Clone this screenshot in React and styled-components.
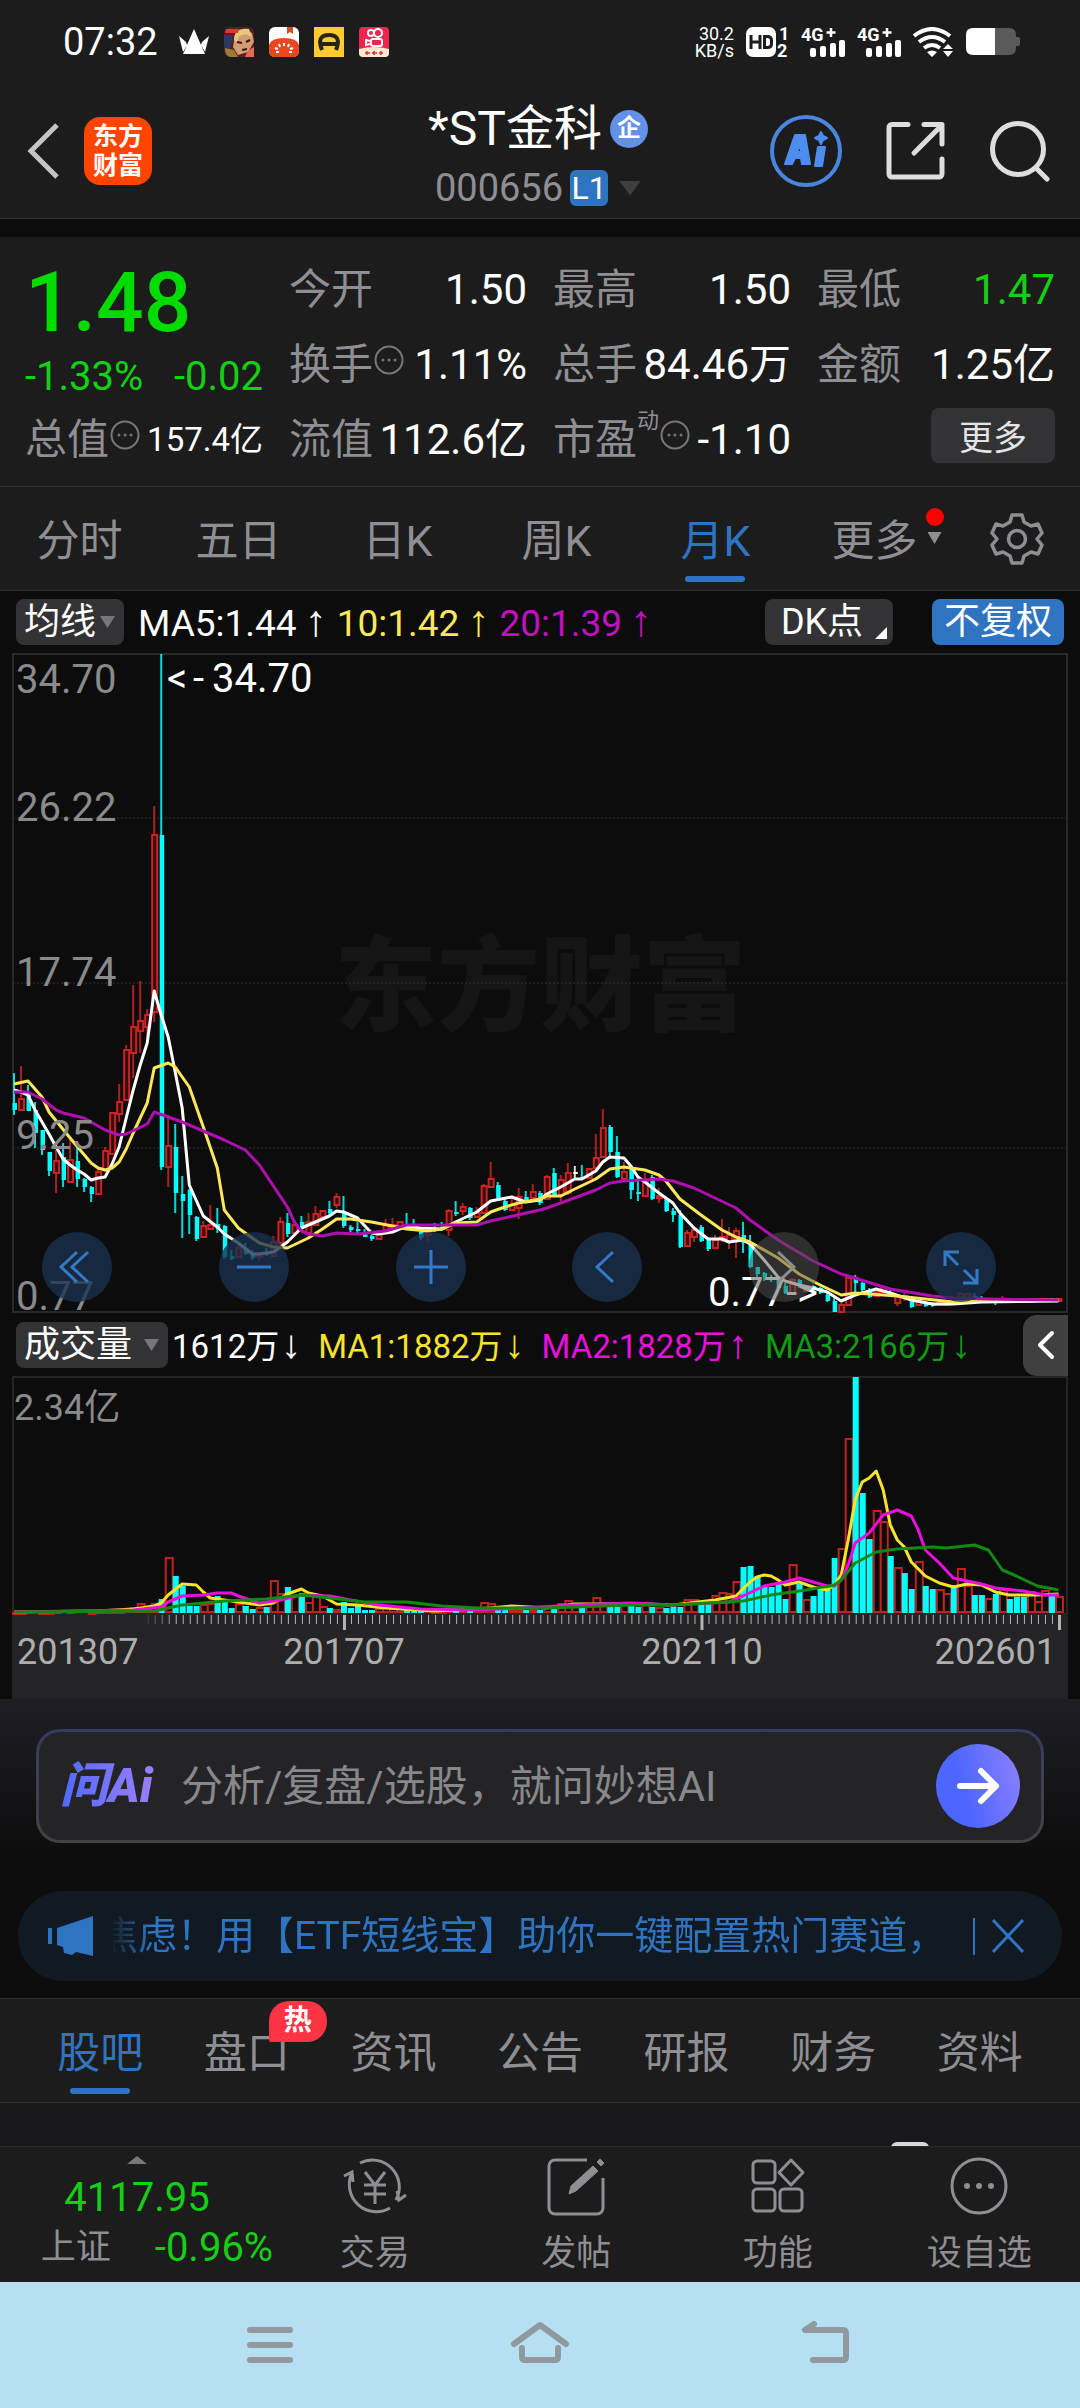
import styled, { createGlobalStyle } from "styled-components"

const STEP = 7.01
const FIRST_X = 14

// [color, high, body top, body bottom, low], one per month
const candles = [
  ['c', 1073, 1103, 1110, 1115], ['r', 1066, 1099, 1110, 1110], ['c', 1085, 1092, 1111, 1111], ['c', 1102, 1110, 1133, 1148],
  ['c', 1130, 1130, 1150, 1155], ['c', 1152, 1152, 1171, 1176], ['r', 1150, 1161, 1173, 1193], ['c', 1143, 1157, 1180, 1187],
  ['r', 1138, 1160, 1182, 1183], ['c', 1148, 1161, 1179, 1187], ['c', 1178, 1179, 1187, 1192], ['c', 1186, 1187, 1194, 1202],
  ['r', 1167, 1172, 1194, 1194], ['r', 1147, 1151, 1170, 1172], ['r', 1113, 1113, 1154, 1154], ['r', 1084, 1102, 1114, 1122],
  ['r', 1045, 1050, 1100, 1101], ['r', 985, 1027, 1053, 1078], ['r', 981, 1021, 1031, 1053], ['r', 1009, 1015, 1027, 1037],
  ['r', 806, 835, 1012, 1022], ['c', 654, 835, 1167, 1170], ['r', 1115, 1146, 1167, 1187], ['c', 1124, 1147, 1193, 1213],
  ['c', 1176, 1194, 1201, 1238], ['c', 1189, 1190, 1215, 1234], ['c', 1216, 1217, 1239, 1241], ['r', 1221, 1226, 1237, 1238],
  ['r', 1205, 1225, 1229, 1230], ['c', 1208, 1224, 1229, 1233], ['c', 1225, 1226, 1257, 1259], ['c', 1250, 1256, 1259, 1260],
  ['r', 1243, 1248, 1257, 1258], ['c', 1243, 1248, 1254, 1255], ['c', 1250, 1254, 1258, 1260], ['r', 1252, 1255, 1257, 1261],
  ['c', 1248, 1252, 1255, 1256], ['r', 1236, 1242, 1256, 1256], ['r', 1217, 1222, 1243, 1245], ['c', 1213, 1223, 1234, 1237],
  ['r', 1222, 1225, 1233, 1234], ['c', 1216, 1222, 1227, 1230], ['r', 1213, 1222, 1233, 1236], ['r', 1206, 1214, 1225, 1226],
  ['r', 1210, 1211, 1217, 1218], ['c', 1201, 1209, 1213, 1215], ['r', 1193, 1197, 1205, 1208], ['c', 1196, 1213, 1226, 1228],
  ['c', 1225, 1227, 1230, 1232], ['c', 1222, 1229, 1231, 1233], ['c', 1229, 1234, 1237, 1237], ['c', 1235, 1236, 1239, 1241],
  ['r', 1230, 1233, 1239, 1240], ['r', 1219, 1225, 1230, 1233], ['r', 1218, 1225, 1228, 1230], ['r', 1221, 1222, 1229, 1230],
  ['c', 1213, 1225, 1228, 1229], ['c', 1219, 1227, 1230, 1231], ['c', 1230, 1232, 1238, 1240], ['r', 1230, 1232, 1235, 1243],
  ['c', 1223, 1228, 1231, 1232], ['c', 1222, 1227, 1230, 1231], ['r', 1209, 1211, 1230, 1236], ['c', 1201, 1212, 1214, 1216],
  ['r', 1203, 1207, 1211, 1215], ['c', 1207, 1208, 1218, 1220], ['r', 1207, 1213, 1217, 1218], ['r', 1184, 1186, 1213, 1214],
  ['r', 1162, 1179, 1187, 1187], ['c', 1182, 1185, 1198, 1199], ['c', 1199, 1201, 1210, 1211], ['r', 1195, 1205, 1210, 1211],
  ['r', 1188, 1197, 1208, 1219], ['c', 1191, 1197, 1202, 1203], ['r', 1184, 1192, 1198, 1200], ['c', 1191, 1193, 1203, 1205],
  ['r', 1175, 1177, 1199, 1200], ['c', 1168, 1173, 1195, 1196], ['r', 1175, 1180, 1195, 1203], ['r', 1163, 1173, 1193, 1195],
  ['w', 1166, 1172, 1174, 1178], ['c', 1165, 1177, 1178, 1178], ['r', 1168, 1169, 1178, 1179], ['r', 1134, 1158, 1168, 1170],
  ['r', 1109, 1128, 1157, 1158], ['c', 1125, 1127, 1152, 1157], ['c', 1136, 1152, 1177, 1178], ['r', 1162, 1172, 1179, 1180],
  ['c', 1166, 1168, 1190, 1199], ['c', 1177, 1192, 1194, 1201], ['r', 1173, 1180, 1196, 1196], ['c', 1175, 1177, 1199, 1200],
  ['r', 1188, 1196, 1198, 1203], ['c', 1197, 1198, 1211, 1212], ['c', 1208, 1211, 1215, 1222], ['c', 1210, 1215, 1247, 1248],
  ['r', 1230, 1233, 1246, 1246], ['r', 1227, 1230, 1237, 1242], ['c', 1225, 1227, 1241, 1242], ['c', 1237, 1240, 1249, 1251],
  ['r', 1235, 1240, 1248, 1249], ['r', 1219, 1237, 1238, 1242], ['r', 1227, 1235, 1242, 1249], ['r', 1228, 1231, 1240, 1258],
  ['c', 1222, 1235, 1243, 1253], ['c', 1235, 1242, 1267, 1268], ['c', 1267, 1267, 1274, 1278], ['c', 1272, 1273, 1277, 1281],
  ['c', 1275, 1277, 1280, 1282], ['c', 1277, 1280, 1288, 1289], ['c', 1283, 1286, 1293, 1294], ['r', 1278, 1280, 1294, 1295],
  ['c', 1279, 1280, 1285, 1288], ['r', 1285, 1287, 1291, 1292], ['c', 1285, 1286, 1290, 1291], ['c', 1287, 1288, 1293, 1294],
  ['c', 1293, 1295, 1301, 1302], ['c', 1298, 1301, 1312, 1312], ['r', 1303, 1305, 1312, 1312], ['r', 1277, 1278, 1305, 1306],
  ['c', 1275, 1277, 1283, 1292], ['c', 1282, 1283, 1290, 1293], ['c', 1288, 1292, 1297, 1298], ['r', 1290, 1292, 1296, 1297],
  ['r', 1286, 1287, 1292, 1293], ['c', 1290, 1292, 1295, 1296], ['r', 1295, 1297, 1303, 1306], ['r', 1293, 1296, 1298, 1301],
  ['c', 1297, 1300, 1307, 1308], ['r', 1300, 1301, 1305, 1306], ['c', 1301, 1302, 1306, 1307], ['c', 1302, 1303, 1306, 1307],
  ['r', 1302, 1303, 1305, 1306], ['r', 1302, 1303, 1305, 1306], ['r', 1300, 1301, 1304, 1305], ['r', 1292, 1294, 1301, 1302],
  ['r', 1293, 1294, 1298, 1300], ['c', 1293, 1296, 1299, 1300], ['c', 1296, 1298, 1300, 1301], ['r', 1298, 1299, 1301, 1302],
  ['c', 1298, 1299, 1301, 1305], ['r', 1296, 1299, 1301, 1302], ['c', 1299, 1300, 1301, 1302], ['c', 1298, 1300, 1301, 1303],
  ['r', 1299, 1300, 1302, 1303], ['r', 1299, 1300, 1302, 1303], ['c', 1299, 1300, 1301, 1302], ['r', 1298, 1299, 1301, 1302],
  ['c', 1298, 1299, 1301, 1302], ['r', 1298, 1299, 1301, 1302],
]

const volumes = [
  'r1', 'r1', 'c1', 'c1', 'r1', 'r1', 'r2', 'c1', 'r2', 'c1', 'c1', 'r1', 'r2', 'r2', 'r2', 'r2', 'r3', 'r6', 'r10', 'r5',
  'r10', 'c14', 'r56', 'c37', 'c27', 'c7', 'c7', 'r9', 'r10', 'c17', 'c11', 'c5', 'r10', 'c7', 'c4', 'r6', 'c6', 'r33', 'r20', 'c26',
  'r18', 'c20', 'r11', 'r18', 'r7', 'c5', 'r4', 'c11', 'c5', 'c8', 'c3', 'c3', 'r5', 'r8', 'r5', 'r5', 'c4', 'c3', 'c3', 'r3',
  'r2', 'r2', 'r3', 'c2', 'r3', 'c2', 'r4', 'r11', 'r10', 'c3', 'c3', 'r4', 'r4', 'c3', 'r4', 'c3', 'r7', 'c6', 'r10', 'r13',
  'r8', 'c6', 'r8', 'r16', 'r10', 'c7', 'c6', 'r11', 'c8', 'c6', 'r10', 'c6', 'r6', 'c5', 'c6', 'c6', 'r14', 'r14', 'c9', 'c9',
  'r18', 'r21', 'r20', 'r32', 'c46', 'c47', 'c37', 'c27', 'c26', 'c29', 'c14', 'r49', 'c29', 'r14', 'c17', 'c24', 'c23', 'c55', 'r65', 'r175',
  'c236', 'c120', 'c74', 'r103', 'r92', 'c57', 'r46', 'c40', 'c24', 'r52', 'c27', 'c24', 'r24', 'r20', 'c28', 'r45', 'r28', 'c18', 'c18', 'r15',
  'c19', 'r24', 'c14', 'c16', 'c16', 'r22', 'r12', 'r23', 'c20', 'r17',
]

// moving averages: month index, y
const priceLines = [
  {
    color: '#ffffff',
    points: [[0, 1090], [1, 1092], [2, 1095], [3, 1110], [4, 1122], [5, 1134], [6, 1147], [7, 1159], [8, 1165], [9, 1170], [10, 1174], [11, 1180], [12, 1178], [13, 1177], [14, 1164], [15, 1147], [16, 1118], [17, 1090], [18, 1065], [19, 1043], [20, 991], [21, 1015], [22, 1037], [23, 1072], [24, 1108], [25, 1185], [27, 1216], [29, 1227], [30, 1234], [32, 1243], [34, 1254], [35, 1254], [37, 1252], [39, 1242], [41, 1228], [43, 1222], [45, 1216], [46, 1211], [47, 1212], [49, 1218], [51, 1233], [52, 1234], [54, 1232], [56, 1226], [58, 1228], [61, 1229], [63, 1222], [66, 1212], [68, 1201], [71, 1197], [73, 1202], [75, 1200], [76, 1194], [78, 1187], [80, 1179], [81, 1179], [83, 1171], [84, 1162], [85, 1157], [87, 1158], [88, 1166], [89, 1177], [90, 1182], [92, 1193], [94, 1203], [95, 1213], [97, 1228], [99, 1239], [101, 1239], [102, 1242], [104, 1240], [105, 1244], [107, 1260], [109, 1277], [110, 1281], [112, 1285], [114, 1288], [116, 1292], [118, 1301], [120, 1295], [123, 1289], [125, 1293], [128, 1300], [131, 1304], [134, 1304], [138, 1302], [149, 1301]],
  },
  {
    color: '#fbe75a',
    points: [[0, 1084], [2, 1081], [4, 1097], [5, 1112], [8, 1138], [11, 1163], [12, 1168], [13, 1170], [14, 1168], [15, 1162], [16, 1149], [17, 1133], [19, 1103], [20, 1068], [22, 1063], [23, 1067], [25, 1087], [27, 1127], [29, 1168], [30, 1210], [32, 1228], [35, 1243], [37, 1247], [39, 1248], [42, 1238], [44, 1229], [46, 1219], [48, 1219], [51, 1222], [54, 1226], [56, 1229], [59, 1231], [61, 1229], [63, 1223], [66, 1222], [68, 1212], [70, 1207], [72, 1203], [75, 1199], [76, 1196], [78, 1196], [80, 1189], [83, 1179], [85, 1169], [87, 1167], [90, 1170], [92, 1175], [93, 1181], [95, 1199], [98, 1215], [101, 1230], [103, 1237], [105, 1242], [109, 1258], [112, 1274], [115, 1285], [118, 1295], [120, 1293], [126, 1296], [130, 1299], [134, 1302], [139, 1300], [149, 1300]],
  },
  {
    color: '#b00fb0',
    points: [[0, 1092], [2, 1092], [4, 1099], [6, 1110], [7, 1113], [10, 1118], [13, 1130], [15, 1135], [16, 1134], [19, 1124], [20, 1112], [24, 1122], [26, 1128], [30, 1140], [33, 1150], [35, 1165], [39, 1207], [40, 1222], [41, 1231], [42, 1234], [44, 1236], [46, 1233], [49, 1234], [53, 1231], [56, 1225], [66, 1225], [68, 1221], [75, 1210], [76, 1208], [78, 1203], [83, 1190], [85, 1183], [87, 1181], [92, 1179], [94, 1181], [97, 1188], [103, 1208], [105, 1220], [109, 1240], [114, 1261], [118, 1274], [119, 1276], [125, 1289], [131, 1296], [134, 1298], [139, 1299], [149, 1300]],
  },
]

const volumeLines = [
  {
    color: '#f7e32a',
    points: [[0, 1612], [12, 1611], [17, 1609], [20, 1606], [21, 1603], [22, 1595], [24, 1584], [26, 1585], [27, 1592], [28, 1598], [30, 1600], [33, 1603], [35, 1605], [37, 1603], [39, 1594], [41, 1589], [42, 1593], [44, 1596], [46, 1604], [49, 1605], [53, 1608], [60, 1611], [66, 1609], [71, 1606], [76, 1608], [80, 1604], [90, 1604], [94, 1605], [100, 1600], [103, 1596], [104, 1589], [105, 1582], [106, 1577], [107, 1575], [108, 1576], [109, 1580], [110, 1585], [112, 1582], [114, 1587], [116, 1590], [117, 1585], [118, 1575], [119, 1540], [120, 1500], [121, 1482], [122, 1478], [123, 1471], [124, 1490], [125, 1525], [126, 1540], [127, 1547], [128, 1562], [130, 1576], [132, 1583], [134, 1587], [136, 1584], [138, 1585], [140, 1592], [142, 1595], [146, 1595], [149, 1594]],
  },
  {
    color: '#ea0fdc',
    points: [[0, 1612], [17, 1610], [21, 1607], [22, 1602], [24, 1596], [27, 1595], [29, 1593], [31, 1593], [32, 1596], [35, 1603], [38, 1600], [41, 1595], [45, 1596], [48, 1600], [52, 1605], [58, 1609], [66, 1610], [75, 1607], [80, 1605], [88, 1603], [94, 1605], [102, 1602], [104, 1596], [107, 1586], [110, 1582], [112, 1578], [116, 1586], [117, 1586], [118, 1580], [119, 1565], [120, 1543], [122, 1533], [124, 1515], [126, 1510], [128, 1516], [129, 1530], [130, 1550], [132, 1563], [134, 1578], [138, 1584], [140, 1588], [144, 1591], [147, 1595], [149, 1595]],
  },
  {
    color: '#128a12',
    points: [[0, 1612], [20, 1611], [24, 1605], [30, 1601], [36, 1599], [41, 1595], [45, 1598], [50, 1602], [56, 1602], [61, 1606], [66, 1608], [76, 1608], [88, 1605], [94, 1605], [104, 1601], [108, 1595], [113, 1590], [117, 1585], [118, 1580], [120, 1563], [123, 1552], [126, 1549], [131, 1547], [133, 1548], [137, 1545], [139, 1550], [141, 1570], [143, 1576], [146, 1586], [149, 1590]],
  },
]

const periods = ['分时', '五日', '日K', '周K', '月K', '更多']
const sections = ['股吧', '盘口', '资讯', '公告', '研报', '财务', '资料']
const candleColors = { r: '#c92323', c: '#00ffff', w: '#ffffff' }

const xAt = i => FIRST_X + i * STEP
const toPoints = line => line.map(([i, y]) => `${xAt(i).toFixed(1)},${y}`).join(' ')

export default function App() {
  return (
    <Page>
      <GlobalStyle />
      <StatusBar>
        <StatusGroup>
          <Clock>07:32</Clock>
          <AppIcons>
            <CrownIcon />
            <GameIcon />
            <TomatoIcon />
            <CarIcon />
            <VideoIcon />
          </AppIcons>
        </StatusGroup>
        <StatusSide>
          <NetSpeed>30.2<br />KB/s</NetSpeed>
          <HdIcon />
          <SignalIcon />
          <SignalIcon />
          <WifiIcon />
          <BatteryIcon />
        </StatusSide>
      </StatusBar>

      <Header>
        <HeaderLeft>
          <IconButton aria-label="返回">
            <svg width="34" height="58" viewBox="0 0 34 58" fill="none" stroke="#c4c4c4" strokeWidth="5"><path d="M31 3 5 29l26 26" /></svg>
          </IconButton>
          <Logo>东方<br />财富</Logo>
        </HeaderLeft>
        <HeaderTitle>
          <h1>*ST金科<Verified>企</Verified></h1>
          <CodeButton>
            000656<Level>L1</Level><Caret $w={22} $h={15} $color="#3f3f41" />
          </CodeButton>
        </HeaderTitle>
        <HeaderRight>
          <IconButton aria-label="AI"><AiIcon /></IconButton>
          <IconButton aria-label="分享">
            <svg width="60" height="60" viewBox="0 0 60 60" fill="none" stroke="#dedede" strokeWidth="5" strokeLinecap="round" strokeLinejoin="round">
              <path d="M22 3.500H6a3 3 0 0 0-3 3V53a3 3 0 0 0 3 3h47a3 3 0 0 0 3-3V38M38 3.500h18V23M55 5 28 32" />
            </svg>
          </IconButton>
          <IconButton aria-label="搜索">
            <svg width="60" height="62" viewBox="0 0 60 62" fill="none" stroke="#dedede" strokeWidth="5" strokeLinecap="round">
              <circle cx="28" cy="29" r="25.500" /><path d="m46 48 11 11" />
            </svg>
          </IconButton>
        </HeaderRight>
      </Header>

      <Quote>
        <PriceBlock>
          <Price>1.48</Price>
          <Change><span>-1.33%</span><span>-0.02</span></Change>
        </PriceBlock>
        <Stat><dt>今开</dt><dd>1.50</dd></Stat>
        <Stat><dt>最高</dt><dd>1.50</dd></Stat>
        <Stat $down><dt>最低</dt><dd>1.47</dd></Stat>
        <Stat><dt>换手<InfoDots /></dt><dd>1.11%</dd></Stat>
        <Stat><dt>总手</dt><dd>84.46万</dd></Stat>
        <Stat><dt>金额</dt><dd>1.25亿</dd></Stat>
        <Stat $small><dt>总值<InfoDots /></dt><dd>157.4亿</dd></Stat>
        <Stat><dt>流值</dt><dd>112.6亿</dd></Stat>
        <Stat><dt>市盈<Sup>动</Sup><InfoDots /></dt><dd>-1.10</dd></Stat>
        <MoreCell><MoreButton>更多</MoreButton></MoreCell>
      </Quote>

      <Periods>
        {periods.map(p => (
          <Tab key={p} $active={p === '月K'}>
            <span>{p}{p === '更多' && <MoreMark><i /><Caret $w={14} $h={12} $color="#8e8e93" /></MoreMark>}</span>
          </Tab>
        ))}
        <SettingsButton aria-label="设置"><GearIcon /></SettingsButton>
      </Periods>

      <ChartArea>
        <ChartBar>
          <Picker $width={108}>
            <select aria-label="主图指标"><option>均线</option></select>
            <Caret $w={15} $h={12} $color="#77777a" />
          </Picker>
          <PriceLegend>
            <Legend $color="#fff">MA5:1.44<Arrow>↑</Arrow></Legend>
            <Legend $color="#fbe75a">10:1.42<Arrow>↑</Arrow></Legend>
            <Legend $color="#c010c0">20:1.39<Arrow>↑</Arrow></Legend>
          </PriceLegend>
          <ChartButtons>
            <DkButton>DK点<Corner /></DkButton>
            <AdjustButton>不复权</AdjustButton>
          </ChartButtons>
        </ChartBar>

        <PriceChartBox>
          <PriceChart />
          <Controls>
            <Control aria-label="最早"><path d="M35 20 19 35l16 15M46 20 30 35l16 15" /></Control>
            <Control aria-label="缩小"><path d="M18 35h34" /></Control>
            <Control aria-label="放大"><path d="M18 35h34M35 18v34" /></Control>
            <Control aria-label="左移"><path d="M41 20 25 35l16 15" /></Control>
            <Control aria-label="右移" disabled><path d="m29 20 16 15-16 15" /></Control>
            <Control aria-label="全屏"><path d="M19 34V20h14M20 21l12 12M51 37v14H37M50 50 38 38" /></Control>
          </Controls>
        </PriceChartBox>

        <ChartBar>
          <Picker $width={152}>
            <select aria-label="副图指标"><option>成交量</option></select>
            <Caret $w={15} $h={12} $color="#77777a" />
          </Picker>
          <VolumeLegend>
            <Legend $color="#fff">1612万<Arrow>↓</Arrow></Legend>
            <Legend $color="#f7e32a">MA1:1882万<Arrow>↓</Arrow></Legend>
            <Legend $color="#ea0fdc">MA2:1828万<Arrow>↑</Arrow></Legend>
            <Legend $color="#129a12">MA3:2166万<Arrow>↓</Arrow></Legend>
          </VolumeLegend>
          <Drawer aria-label="展开">
            <svg width="18" height="30" viewBox="0 0 18 30" fill="none" stroke="#fff" strokeWidth="4" strokeLinecap="round" strokeLinejoin="round"><path d="M15 3 3 15l12 12" /></svg>
          </Drawer>
        </ChartBar>
        <VolumeChart />
      </ChartArea>

      <AskArea>
        <AskBox>
          <AskLogo>问Ai</AskLogo>
          <AskInput aria-label="问AI" placeholder="分析/复盘/选股，就问妙想AI" />
          <SendButton aria-label="发送">
            <svg width="44" height="38" viewBox="0 0 44 38" fill="none" stroke="#fff" strokeWidth="6" strokeLinecap="round" strokeLinejoin="round"><path d="M4 19h36M25 4l15 15-15 15" /></svg>
          </SendButton>
        </AskBox>
        <Notice>
          <svg width="46" height="40" viewBox="0 0 46 40" fill="#2f74c0"><path d="M0 12h4v16H0zM9 12 45 0v40l-17-4-4 3-8-2-1-6-6-2z" /></svg>
          <Ticker><span>焦虑！用【ETF短线宝】助你一键配置热门赛道，</span></Ticker>
          <NoticeClose aria-label="关闭">
            <svg width="32" height="34" viewBox="0 0 32 34" stroke="#2f74c0" strokeWidth="3"><path d="m1 1 30 32M31 1 1 33" /></svg>
          </NoticeClose>
        </Notice>
      </AskArea>

      <Sections>
        {sections.map(s => (
          <Tab key={s} $active={s === '股吧'}>
            <span>{s}{s === '盘口' && <Hot>热</Hot>}</span>
          </Tab>
        ))}
      </Sections>
      <Feed><FeedCard /></Feed>

      <BottomBar>
        <IndexBlock>
          <Caret $w={20} $h={8} $color="#77777a" $up />
          <strong>4117.95</strong>
          <p>上证<em>-0.96%</em></p>
        </IndexBlock>
        <BottomItem>
          <svg viewBox="0 0 66 60">
            <path d="M18 7a27 27 0 0 1 36 37M48 52A27 27 0 0 1 10 17M2 20l8-4 1 10M64 39l-7 5-2-9M23 16l10 13 10-13M33 29v19M22 29h22M22 38h22" />
          </svg>
          交易
        </BottomItem>
        <BottomItem>
          <svg viewBox="0 0 66 60">
            <path d="M44 4H12a6 6 0 0 0-6 6v42a6 6 0 0 0 6 6h42a6 6 0 0 0 6-6V22" /><path d="m26 38 2-8L50 10l5 5-22 20zM54 6l3-3 4 4-3 3z" fill="#8e8e93" strokeWidth="1" />
          </svg>
          发帖
        </BottomItem>
        <BottomItem>
          <svg viewBox="0 0 66 60">
            <rect x="8" y="5" width="22" height="22" rx="4" /><rect x="8" y="33" width="22" height="22" rx="4" /><rect x="35" y="33" width="22" height="22" rx="4" /><path d="M46 4 58 16.500 46 29 34 16.500z" strokeLinejoin="round" />
          </svg>
          功能
        </BottomItem>
        <BottomItem>
          <svg viewBox="0 0 66 60">
            <circle cx="33" cy="30" r="27" /><g fill="#8e8e93" stroke="none"><circle cx="21" cy="30" r="3" /><circle cx="33" cy="30" r="3" /><circle cx="45" cy="30" r="3" /></g>
          </svg>
          设自选
        </BottomItem>
      </BottomBar>

      <SystemNav>
        <button aria-label="最近任务"><svg viewBox="0 0 78 48"><path d="M19 9h40M19 24h40M19 39h40" /></svg></button>
        <button aria-label="主屏幕"><svg viewBox="0 0 78 48"><path d="M13 23 39 4l26 19M21 27v9q0 3 3 3h30q3 0 3-3v-9" /></svg></button>
        <button aria-label="返回"><svg viewBox="0 0 78 48"><path d="M43 3l-9 6h38q3 0 3 3v24q0 3-3 3H42" /></svg></button>
      </SystemNav>
    </Page>
  )
}

function PriceChart() {
  return (
    <svg viewBox="12 653 1056 661" role="img" aria-label="月K线">
      <Watermark x="334" y="1023">东方财富</Watermark>
      <rect x="13" y="654" width="1054" height="658" fill="none" stroke="#292929" strokeWidth="2" />
      {[818, 983, 1148].map(y => (
        <path key={y} d={`M13 ${y}H1067`} stroke="#333" strokeDasharray="2 2" />
      ))}
      {candles.map(([kind, high, top, bottom, low], i) => {
        const x = xAt(i)
        const color = candleColors[kind]
        return (
          <g key={i}>
            <path d={`M${x} ${high}V${low}`} stroke={color} strokeWidth="2" opacity="0.85" />
            {kind === 'r'
              ? <rect x={x - 2} y={top} width="5" height={Math.max(bottom - top, 1)} fill="#3a0c0c" stroke={color} strokeWidth="2" />
              : <rect x={x - 1.500} y={top} width="4.500" height={bottom - top} fill={color} />}
          </g>
        )
      })}
      {priceLines.map(line => (
        <polyline key={line.color} points={toPoints(line.points)} fill="none" stroke={line.color} strokeWidth="3" strokeLinejoin="round" />
      ))}
      <AxisText x="16" y="693">34.70</AxisText>
      <AxisText x="16" y="821">26.22</AxisText>
      <AxisText x="16" y="986">17.74</AxisText>
      <AxisText x="16" y="1149">9.25</AxisText>
      <AxisText x="16" y="1310">0.77</AxisText>
      <MarkText x="167" y="692">&lt;<tspan x="193">-</tspan><tspan x="212">34.70</tspan></MarkText>
      <MarkText x="708" y="1306">0.77-&gt;</MarkText>
    </svg>
  )
}

function VolumeChart() {
  const base = 1613
  return (
    <svg viewBox="12 1376 1056 323" role="img" aria-label="成交量">
      <rect x="13" y="1377" width="1054" height="237" fill="none" stroke="#3c3c3c" strokeWidth="1" />
      {volumes.map((v, i) => {
        const h = Number(v.slice(1))
        const x = xAt(i)
        return v[0] === 'c'
          ? <rect key={i} x={x - 2.500} y={base - h} width="6" height={h} fill="#00ffff" />
          : <rect key={i} x={x - 2.500} y={base - h + 1} width="7" height={Math.max(h - 2, 1)} fill="#0c0c0c" stroke="#c32020" strokeWidth="2" />
      })}
      {volumeLines.map(line => (
        <polyline key={line.color} points={toPoints(line.points)} fill="none" stroke={line.color} strokeWidth="3" strokeLinejoin="round" />
      ))}
      <SmallAxisText x="14" y="1420">2.34亿</SmallAxisText>
      <rect x="12" y="1615" width="1056" height="84" fill="#242426" />
      {volumes.map((_, i) => i > 18 && (
        <path key={i} d={`M${xAt(i) + 1} 1615v9`} stroke="#b4b4b4" strokeWidth="1" opacity={Math.min((i - 18) / 5, 1)} />
      ))}
      {[47, 98, 149].map(i => (
        <path key={i} d={`M${xAt(i) + 1} 1615v15`} stroke="#b4b4b4" strokeWidth="3" />
      ))}
      <DateText x="17" y="1664">201307</DateText>
      <DateText x="344" y="1664" textAnchor="middle">201707</DateText>
      <DateText x="702" y="1664" textAnchor="middle">202110</DateText>
      <DateText x="1056" y="1664" textAnchor="end">202601</DateText>
    </svg>
  )
}

function Control({ children, disabled, ...rest }) {
  return (
    <ControlButton disabled={disabled} {...rest}>
      <svg width="70" height="70" viewBox="0 0 70 70" fill="none" stroke={disabled ? '#8d8d8d' : '#3478c6'} strokeWidth="3">{children}</svg>
    </ControlButton>
  )
}

const CrownIcon = () => (
  <svg width="30" height="30" viewBox="0 0 30 30" fill="#fff"><path d="M15 2 26 27H4zM0 9l7 6 1 3-4 7zM30 9l-7 6-1 3 4 7z" /></svg>
)

const GameIcon = () => (
  <svg width="30" height="30" viewBox="0 0 30 30">
    <rect width="30" height="30" rx="6" fill="#572020" />
    <path d="M0 8h9l-3 14-6-2z" fill="#2c3868" />
    <path d="M11 8q8-10 17-2l2 9-6 10-10 3-5-8z" fill="#d59b74" />
    <path d="M10 13Q10 0 25 2l3 8-6-3-7 2-2 6z" fill="#e9c778" />
    <path d="M2 2h13l-1 4H1z" fill="#d93b28" />
    <path d="m13 15 5 1M22 15l4-2M18 23l5-1" stroke="#3a1712" strokeWidth="2" />
    <path d="M1 21l9 2 4 7H6q-5-1-5-9z" fill="#9b7b36" />
    <path d="M30 20v10h-9q2-7 9-10z" fill="#e66a52" />
  </svg>
)

const TomatoIcon = () => (
  <svg width="30" height="30" viewBox="0 0 30 30">
    <rect width="30" height="30" rx="6" fill="#fff" />
    <path d="M0 18Q2 11 15 11t15 7v6q0 6-6 6H6q-6 0-6-6z" fill="#ea4620" />
    <path d="M18 0h6v7l-3-2-3 2z" fill="#d9482a" />
    <path d="M15 16v3M10 17l1 3M20 17l-1 3M6 21l3 1M24 21l-3 1M7 25h3M20 25h3" stroke="#fff" strokeWidth="2" />
  </svg>
)

const CarIcon = () => (
  <svg width="30" height="30" viewBox="0 0 30 30">
    <rect width="30" height="30" fill="#ffcb30" />
    <path d="M8 23Q2 8 15 8t7 15M7 17h16" fill="none" stroke="#26241f" strokeWidth="4" />
  </svg>
)

const VideoIcon = () => (
  <svg width="30" height="30" viewBox="0 0 30 30">
    <rect width="30" height="30" rx="4" fill="#f0244f" />
    <path d="M0 22q15-4 30 0v4q0 4-4 4H4q-4 0-4-4z" fill="#fbe9cf" />
    <g fill="none" stroke="#fff" strokeWidth="2"><circle cx="12" cy="6" r="3" /><circle cx="19" cy="6" r="4" /><rect x="12" y="12" width="11" height="7" rx="2" /><path d="m11 14-4-1v5l4-1" /></g>
    <path d="M6 26h5M13 26h5M20 26h4M8 24v4M15 24v4M22 24v4" stroke="#e5294b" strokeWidth="1.500" />
  </svg>
)

const HdIcon = () => (
  <StatusSvg width="43" height="30" viewBox="0 0 43 30">
    <rect width="30" height="30" rx="7" fill="#fff" />
    <path d="M5 8v14M14 8v14M5 15h9M18.500 9.500h3q4 0 4 4v3q0 4-4 4h-3z" fill="none" stroke="#1c1c1c" strokeWidth="3" />
    <StatusText x="33" y="13">1</StatusText>
    <StatusText x="31" y="30">2</StatusText>
  </StatusSvg>
)

const SignalIcon = () => (
  <StatusSvg width="44" height="30" viewBox="0 0 44 30">
    <StatusText x="0" y="14">4G</StatusText>
    <path d="M30 1v9M25.500 5.500h9" stroke="#fff" strokeWidth="2.500" />
    <g fill="#fff"><rect x="9" y="21" width="6" height="9" rx="2" /><rect x="19" y="19" width="6" height="11" rx="2" /><rect x="29" y="16" width="6" height="14" rx="2" /><rect x="38" y="13" width="6" height="17" rx="2" /></g>
  </StatusSvg>
)

const WifiIcon = () => (
  <svg width="41" height="30" viewBox="0 0 41 30" fill="none" stroke="#fff" strokeWidth="4">
    <path d="M1 9Q19-5 37 9M6 15q13-10 26 0M11 21q8-6 16 0" />
    <path d="M14 25q5-3 10 0l-5 5zM35 17l5 5H30zM30 24h10l-5 6z" fill="#fff" stroke="none" />
  </svg>
)

const BatteryIcon = () => (
  <svg width="54" height="28" viewBox="0 0 54 28">
    <path d="M29 0h14q7 0 7 7v2h2q2 0 2 2v5q0 2-2 2h-2v2q0 7-7 7H29z" fill="#5a5a5a" />
    <path d="M7 0h22v27H7q-7 0-7-7V7q0-7 7-7z" fill="#fff" />
  </svg>
)

const AiIcon = () => (
  <svg width="72" height="72" viewBox="0 0 72 72">
    <circle cx="36" cy="36" r="34" fill="none" stroke="#4a86e0" strokeWidth="4" />
    <g fill="#4d8df0" stroke="#4d8df0" strokeWidth="2" strokeLinejoin="round">
      <path fillRule="evenodd" d="M25 20h10l5 29h-8l-1-6h-6l-3 6h-7zM30 29l-3 8h4z" />
      <path d="M48 32h7l-3 19h-7zM51 17l2 4 4 2-4 2-2 4-2-4-4-2 4-2z" />
    </g>
  </svg>
)

const GearIcon = () => (
  <svg width="54" height="54" viewBox="0 0 54 54" fill="none" stroke="#8e8e93" strokeWidth="3.500" strokeLinejoin="round">
    <path d="M22 3h10l2 7 7 4 7-2 4 9-5 6 5 6-4 9-7-2-7 4-2 7H22l-2-7-7-4-7 2-4-9 5-6-5-6 4-9 7 2 7-4z" />
    <circle cx="27" cy="27" r="8.500" />
  </svg>
)

const InfoDots = () => (
  <svg width="30" height="30" viewBox="0 0 30 30">
    <circle cx="15" cy="15" r="13.500" fill="none" stroke="#77777b" strokeWidth="2" />
    <g fill="#77777b"><circle cx="9" cy="15" r="1.500" /><circle cx="15" cy="15" r="1.500" /><circle cx="21" cy="15" r="1.500" /></g>
  </svg>
)

const GlobalStyle = createGlobalStyle`
  * {
    box-sizing: border-box;
  }
  body {
    margin: 0;
    background: #0c0c0c;
  }
  body, button, input, select {
    font-family: Roboto, "Noto Sans CJK SC", sans-serif;
  }
  button {
    padding: 0;
    border: none;
    background: none;
    color: inherit;
  }
  h1, p, dl, dd {
    margin: 0;
  }
  svg {
    display: block;
    flex-shrink: 0;
  }
`
const Page = styled.div`
  display: flex;
  flex-direction: column;
  color: #fff;
`
const StatusBar = styled.div`
  display: flex;
  justify-content: space-between;
  align-items: center;
  height: 84px;
  padding: 0 60px 0 63px;
  background: #1c1c1c;
`
const StatusGroup = styled.div`
  display: flex;
  align-items: center;
  gap: 21px;
`
const StatusSide = styled(StatusGroup)`
  gap: 12px;
`
const Clock = styled.span`
  font-size: 38px;
  line-height: 44px;
`
const AppIcons = styled.div`
  display: flex;
  gap: 15px;
`
const NetSpeed = styled.span`
  font-size: 18px;
  line-height: 17px;
  text-align: right;
`
const StatusSvg = styled.svg`
  overflow: visible;
`
const StatusText = styled.text`
  fill: #fff;
  font-size: 18px;
  font-weight: 700;
`
const Header = styled.header`
  display: grid;
  grid-template-columns: 1fr auto 1fr;
  align-items: center;
  height: 135px;
  padding: 0 30px 0 26px;
  background: #1c1c1c;
  border-bottom: 1px solid #303030;
`
const HeaderLeft = styled.div`
  display: flex;
  align-items: center;
  gap: 24px;
`
const HeaderRight = styled(HeaderLeft)`
  justify-content: flex-end;
  gap: 44px;
`
const IconButton = styled.button`
  display: flex;
`
const Logo = styled.div`
  width: 68px;
  height: 68px;
  padding-top: 5px;
  border-radius: 16px;
  background: #ff4500;
  font-size: 25px;
  font-weight: 700;
  line-height: 29px;
  text-align: center;
`
const HeaderTitle = styled.div`
  display: flex;
  flex-direction: column;
  align-items: center;
  padding-top: 14px;
  h1 {
    display: flex;
    align-items: center;
    gap: 8px;
    font-size: 48px;
    font-weight: 400;
    line-height: 60px;
  }
`
const Verified = styled.span`
  width: 38px;
  height: 38px;
  border-radius: 50%;
  background: #6390e8;
  font-size: 24px;
  font-weight: 700;
  line-height: 36px;
  text-align: center;
`
const CodeButton = styled.button`
  display: flex;
  align-items: center;
  color: #8e8e93;
  font-size: 38px;
  line-height: 58px;
`
const Level = styled.span`
  width: 38px;
  margin: 0 11px 0 7px;
  border-radius: 6px;
  background: #2f74c0;
  color: #fff;
  font-size: 32px;
  line-height: 36px;
`
const Caret = styled.i`
  width: ${(props) => props.$w}px;
  height: ${(props) => props.$h}px;
  background: ${(props) => props.$color};
  clip-path: ${(props) => (props.$up ? 'polygon(50% 0, 100% 100%, 0 100%)' : 'polygon(0 0, 100% 0, 50% 100%)')};
`
const Quote = styled.dl`
  display: grid;
  grid-template-columns: repeat(4, 1fr);
  grid-auto-rows: 75px;
  column-gap: 26px;
  margin-top: 18px;
  padding: 15px 25px 9px;
  background: #1c1c1c;
  border-bottom: 1px solid #303030;
`
const PriceBlock = styled.div`
  grid-row: span 2;
  color: #00dc00;
`
const Price = styled.div`
  font-size: 84px;
  font-weight: 500;
  line-height: 102px;
`
const Change = styled.div`
  display: flex;
  justify-content: space-between;
  color: #14d014;
  font-size: 40px;
  line-height: 45px;
`
const Stat = styled.div`
  display: flex;
  align-items: center;
  justify-content: space-between;
  white-space: nowrap;
  dt {
    display: flex;
    align-items: center;
    color: #8e8e93;
    font-size: 42px;
    line-height: 60px;
  }
  dt svg {
    margin: 0 0 10px 1px;
  }
  dd {
    color: ${(props) => (props.$down ? '#14d014' : '#fff')};
    font-size: ${(props) => (props.$small ? 33 : 42)}px;
    line-height: 60px;
  }
`
const Sup = styled.sup`
  align-self: flex-start;
  font-size: 22px;
  line-height: 22px;
`
const MoreCell = styled.div`
  display: flex;
  justify-content: flex-end;
  padding-top: 6px;
`
const MoreButton = styled.button`
  width: 124px;
  height: 55px;
  border-radius: 8px;
  background: #333335;
  color: #e4e4e4;
  font-size: 34px;
`
const Periods = styled.nav`
  display: flex;
  height: 104px;
  background: #1c1c1c;
  border-bottom: 1px solid #303030;
`
const Tab = styled.button`
  flex: 1;
  display: flex;
  justify-content: center;
  color: ${(props) => (props.$active ? '#2f74c0' : '#8e8e93')};
  font-size: 43px;
  line-height: 108px;
  span {
    position: relative;
  }
  > span::after {
    content: "";
    display: ${(props) => (props.$active ? 'block' : 'none')};
    position: absolute;
    top: 89px;
    left: calc(50% - 30px);
    width: 60px;
    height: 6px;
    border-radius: 3px;
    background: #2f74c0;
  }
`
const MoreMark = styled.b`
  position: absolute;
  top: 21px;
  left: 100%;
  display: flex;
  flex-direction: column;
  align-items: center;
  gap: 6px;
  margin-left: 8px;
  i:first-child {
    width: 18px;
    height: 18px;
    border-radius: 50%;
    background: #f00;
  }
`
const SettingsButton = styled.button`
  display: flex;
  align-items: center;
  padding: 0 36px;
`
const ChartArea = styled.section`
  padding: 0 12px;
`
const ChartBar = styled.div`
  display: flex;
  align-items: center;
  height: 62px;
  padding-left: 4px;
`
const Picker = styled.label`
  position: relative;
  flex-shrink: 0;
  select {
    appearance: none;
    width: ${(props) => props.$width}px;
    height: 46px;
    padding: 0 0 0 8px;
    border: none;
    border-radius: 8px;
    background: #333335;
    color: #fff;
    font-size: 36px;
    line-height: 46px;
  }
  i {
    position: absolute;
    top: 17px;
    right: 9px;
    pointer-events: none;
  }
`
const Arrow = styled.span`
  margin-left: 8px;
  font-family: "Liberation Sans", sans-serif;
  font-size: 44px;
`
const PriceLegend = styled.div`
  display: flex;
  gap: 10px;
  margin-left: 14px;
  font-size: 37px;
`
const VolumeLegend = styled(PriceLegend)`
  gap: 17px;
  margin-left: 4px;
  font-size: 33px;
  ${Arrow} {
    margin-left: 2px;
    font-size: 40px;
  }
`
const Legend = styled.span`
  color: ${(props) => props.$color};
  line-height: 46px;
  white-space: nowrap;
`
const ChartButtons = styled.div`
  display: flex;
  gap: 39px;
  margin-left: auto;
  padding-right: 4px;
`
const DkButton = styled.button`
  position: relative;
  width: 128px;
  height: 46px;
  padding-right: 14px;
  border-radius: 8px;
  background: #333335;
  font-size: 36px;
  line-height: 46px;
`
const Corner = styled.i`
  position: absolute;
  right: 6px;
  bottom: 6px;
  width: 12px;
  height: 12px;
  background: #fff;
  clip-path: polygon(100% 0, 100% 100%, 0 100%);
`
const AdjustButton = styled.button`
  width: 132px;
  height: 46px;
  border-radius: 8px;
  background: #2f74c0;
  font-size: 36px;
  line-height: 46px;
`
const PriceChartBox = styled.div`
  position: relative;
`
const Watermark = styled.text`
  fill: #151515;
  font-size: 103px;
  font-weight: 900;
`
const MarkText = styled.text`
  fill: #fff;
  font-size: 40px;
`
const AxisText = styled(MarkText)`
  fill: #8a8a8a;
`
const SmallAxisText = styled(AxisText)`
  font-size: 36px;
`
const DateText = styled(SmallAxisText)`
  fill: #aeaeae;
`
const Controls = styled.div`
  position: absolute;
  right: 72px;
  bottom: 12px;
  left: 30px;
  display: flex;
  justify-content: space-between;
`
const ControlButton = styled.button`
  width: 70px;
  height: 70px;
  border-radius: 50%;
  background: ${(props) => (props.disabled ? 'rgba(80, 80, 80, 0.5)' : 'rgba(26, 50, 80, 0.78)')};
`
const Drawer = styled.button`
  display: flex;
  align-items: center;
  justify-content: center;
  width: 45px;
  height: 61px;
  margin-left: auto;
  border-radius: 14px 0 0 14px;
  background: #404040;
`
const AskArea = styled.section`
  padding: 30px 18px 17px;
  background: linear-gradient(#1e1e25, #0c0c0c 160px);
`
const AskBox = styled.div`
  display: flex;
  align-items: center;
  height: 114px;
  margin: 0 18px 48px;
  padding: 0 21px;
  border: 3px solid transparent;
  border-radius: 24px;
  background: linear-gradient(#242426, #242426) padding-box, linear-gradient(#3a3a60, #424242) border-box;
`
const AskLogo = styled.span`
  width: 121px;
  background: linear-gradient(90deg, #5068ff, #a080ff 100px);
  background-clip: text;
  color: transparent;
  font-size: 48px;
  font-style: italic;
  font-weight: 900;
  line-height: 60px;
`
const AskInput = styled.input`
  flex: 1;
  min-width: 0;
  height: 64px;
  padding: 0;
  border: none;
  outline: none;
  background: none;
  color: #fff;
  font-size: 42px;
  &::placeholder {
    color: #88888a;
  }
`
const SendButton = styled.button`
  display: flex;
  align-items: center;
  justify-content: center;
  width: 84px;
  height: 84px;
  border-radius: 50%;
  background: linear-gradient(75deg, #4d66ff 35%, #8f82ff);
`
const Notice = styled.div`
  display: flex;
  align-items: center;
  height: 90px;
  padding: 0 38px 0 30px;
  border-radius: 45px;
  background: #111a22;
  color: #2f74c0;
`
const Ticker = styled.div`
  flex: 1;
  display: flex;
  margin: 0 18px 0 16px;
  overflow: hidden;
  font-size: 39px;
  line-height: 60px;
  white-space: nowrap;
  mask-image: linear-gradient(90deg, transparent, #000 40px, #000 calc(100% - 40px), transparent);
  span {
    margin-left: -11px;
  }
`
const NoticeClose = styled.button`
  height: 37px;
  padding-left: 17px;
  border-left: 2px solid #2f74c0;
`
const Sections = styled.nav`
  display: flex;
  height: 105px;
  padding: 0 27px;
  background: #1c1c1c;
  border-top: 1px solid #303030;
  border-bottom: 1px solid #303030;
`
const Hot = styled.b`
  position: absolute;
  top: 2px;
  left: 65px;
  width: 58px;
  height: 41px;
  border-radius: 20px 20px 20px 2px;
  background: #ff3344;
  color: #fff;
  font-size: 28px;
  line-height: 40px;
  text-align: center;
`
const Feed = styled.div`
  height: 43px;
  padding: 39px 151px 0 0;
  background: #18181a;
  overflow: hidden;
`
const FeedCard = styled.div`
  width: 38px;
  height: 38px;
  margin-left: auto;
  border-radius: 6px;
  background: #d8d8d8;
`
const BottomBar = styled.nav`
  display: flex;
  height: 136px;
  background: #1c1c1c;
  border-top: 1px solid #2b2b2b;
`
const IndexBlock = styled.div`
  display: flex;
  flex-direction: column;
  align-items: center;
  width: 274px;
  padding-top: 9px;
  color: #14d014;
  strong {
    margin-top: 9px;
    font-size: 40px;
    font-weight: 400;
    line-height: 50px;
  }
  p {
    display: flex;
    gap: 44px;
    padding-left: 40px;
    color: #8e8e93;
    font-size: 35px;
    line-height: 50px;
  }
  em {
    color: #14d014;
    font-size: 40px;
    font-style: normal;
  }
`
const BottomItem = styled.button`
  flex: 1;
  display: flex;
  flex-direction: column;
  align-items: center;
  padding-top: 9px;
  color: #8e8e93;
  font-size: 35px;
  line-height: 50px;
  svg {
    width: 66px;
    height: 60px;
    margin-bottom: 13px;
    fill: none;
    stroke: #8e8e93;
    stroke-width: 3;
  }
`
const SystemNav = styled.nav`
  display: flex;
  height: 126px;
  padding: 0 135px;
  background: #b6dff2;
  button {
    flex: 1;
    display: flex;
    align-items: center;
    justify-content: center;
  }
  svg {
    width: 78px;
    height: 48px;
    fill: none;
    stroke: #8f999e;
    stroke-width: 6;
    stroke-linecap: round;
    stroke-linejoin: round;
  }
`
